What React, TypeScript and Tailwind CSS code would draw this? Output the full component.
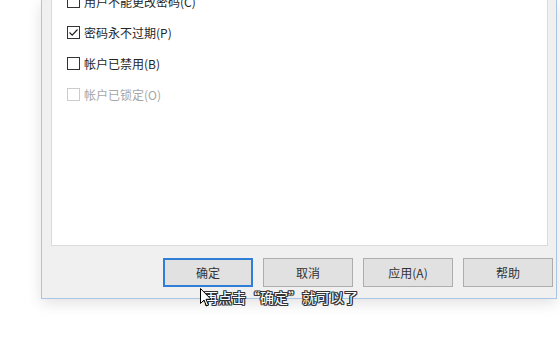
import React from "react";

const font = { fontFamily: '"Noto Sans CJK SC", "Noto Sans", sans-serif' };

interface OptionProps {
  label: string;
  checked?: boolean;
  disabled?: boolean;
}

function Option({ label, checked = false, disabled = false }: OptionProps) {
  return (
    <div className="flex h-[31px] items-center gap-[4px]">
      <span
        className={`flex h-[13px] w-[13px] items-center justify-center border bg-white ${
          disabled ? "border-[#cccccc]" : "border-[#333333]"
        }`}
      >
        {checked && (
          <svg width="11" height="11" viewBox="0 0 11 11">
            <path d="M1.5 5.5 L4.2 8.2 L9.5 2.5" fill="none" stroke="#222" strokeWidth="1.2" />
          </svg>
        )}
      </span>
      <span className={`text-[12px] leading-none ${disabled ? "text-[#a6a6a6]" : "text-[#262626]"}`}>
        {label}
      </span>
    </div>
  );
}

function Button({ label, primary = false }: { label: string; primary?: boolean }) {
  return (
    <div
      className={`flex h-[29px] w-[90px] items-center justify-center bg-[#e1e1e1] text-[12px] text-[#333333] ${
        primary ? "border-2 border-[#2f7fd8]" : "border border-[#adadad]"
      }`}
    >
      {label}
    </div>
  );
}

export default function App() {
  return (
    <div className="relative h-[346px] w-[560px] overflow-hidden bg-white" style={font}>
      <div className="flow-root pl-[41px]">
        <div className="flow-root h-[299px] w-[516px] border-x border-b border-[#a9c6e4] bg-[#f0f0f0] pl-[9px] pr-[3px] shadow-[0_4px_14px_rgba(0,0,0,0.12)]">
          <div className="flow-root h-[246px] w-[497px] border-x border-b border-[#dadada] bg-white pl-[15px]">
            <div className="-mt-[14px]">
              <Option label="用户不能更改密码(C)" />
              <Option label="密码永不过期(P)" checked />
              <Option label="帐户已禁用(B)" />
              <Option label="帐户已锁定(O)" disabled />
            </div>
          </div>
          <div className="mt-[12px] flex justify-end gap-[10px]">
            <Button label="确定" primary />
            <Button label="取消" />
            <Button label="应用(A)" />
            <Button label="帮助" />
          </div>
        </div>
      </div>

      {/* subtitle over the dialog */}
      <div className="absolute left-[204px] top-[290px] text-[14px] leading-none text-white [text-shadow:1px_0_0_#333,-1px_0_0_#333,0_1px_0_#333,0_-1px_0_#333,1px_1px_0_#333,-1px_-1px_0_#333,1px_-1px_0_#333,-1px_1px_0_#333]">
        再点击“确定”就可以了
      </div>

      {/* mouse pointer */}
      <svg className="absolute left-[200px] top-[288px]" width="12" height="19" viewBox="0 0 12 19">
        <path d="M0.5 0.5 L0.5 15.5 L4 12 L6.5 18 L8.5 17 L6 11.3 L11 11.3 Z" fill="#fff" stroke="#000" strokeWidth="1" />
      </svg>
    </div>
  );
}
